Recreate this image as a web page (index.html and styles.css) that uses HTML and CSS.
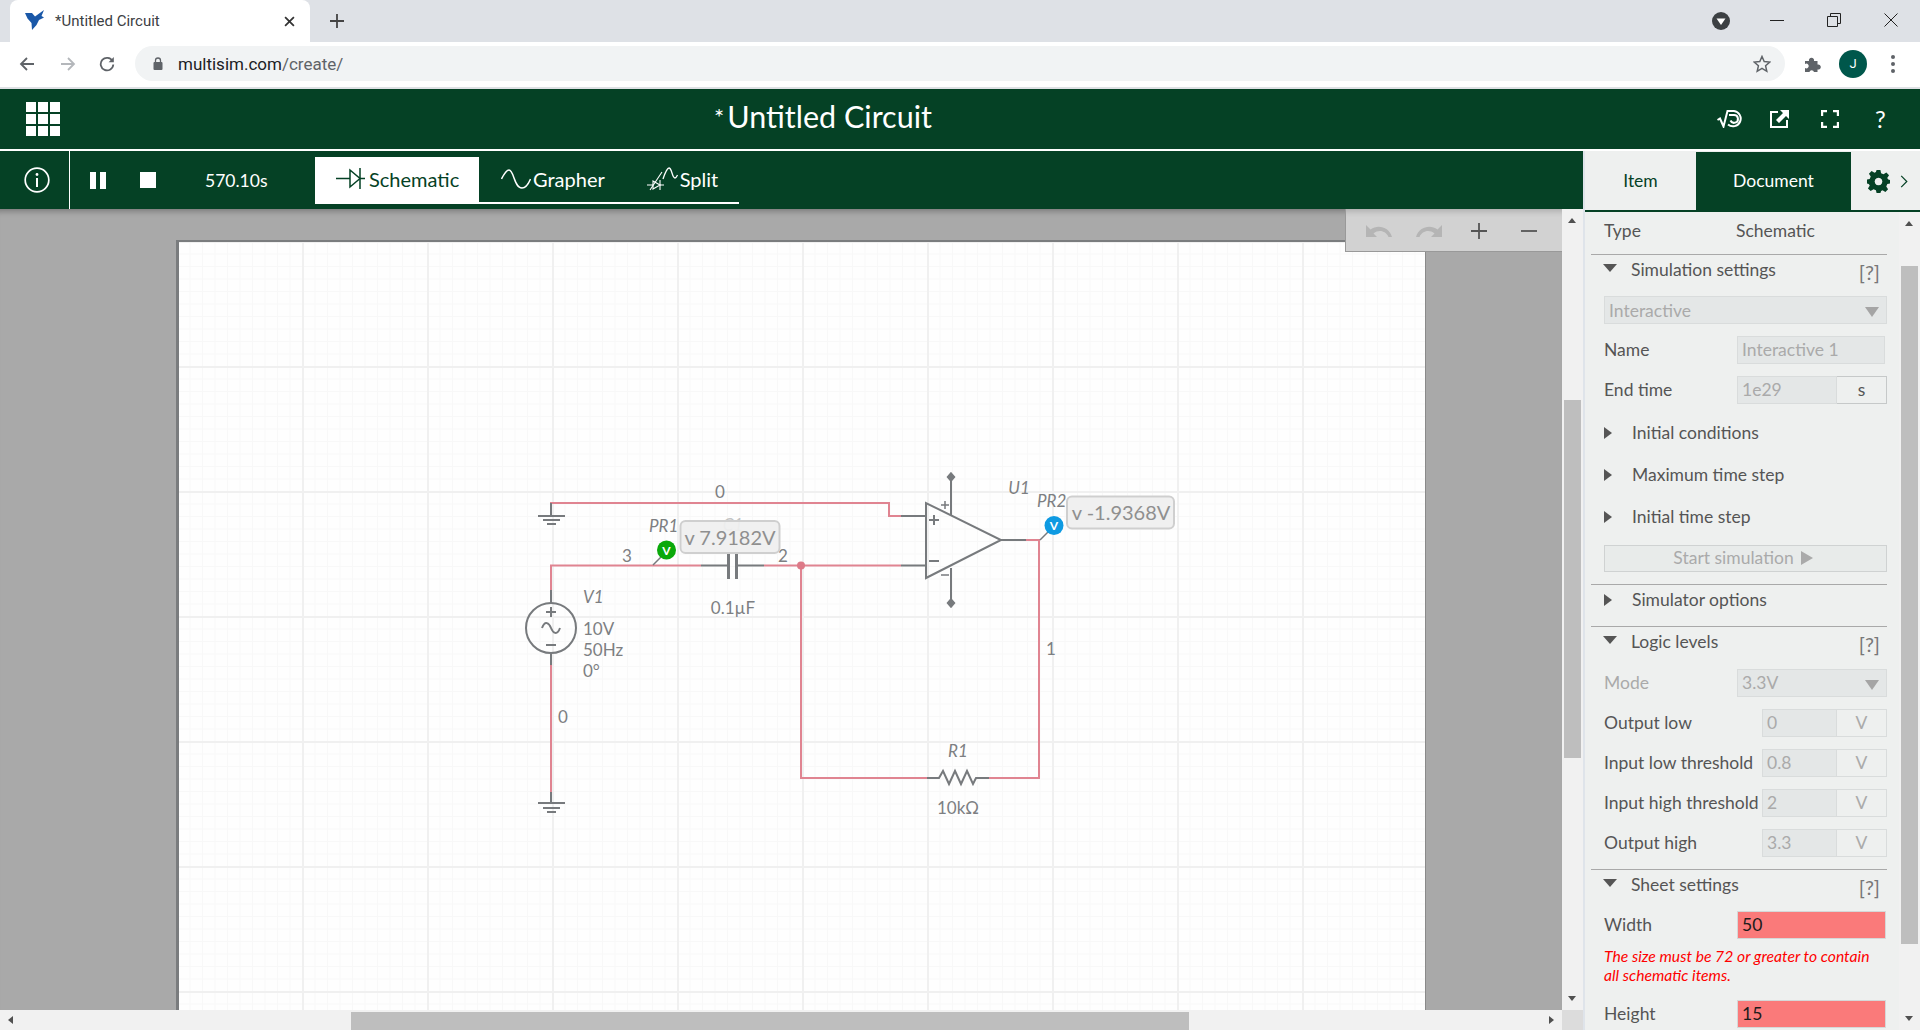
FILE: index.html
```html
<!DOCTYPE html>
<html>
  <head>
    <meta charset="UTF-8">
    <title>*Untitled Circuit</title>
    <link rel="stylesheet" href="styles.css">
  </head>
  <body>
    <!-- browser chrome -->
    <div class="tabstrip">
      <div class="tab">
        <svg class="favicon" viewBox="0 0 20 20"><path d="M0 3 L7 3 L10 6.500 L19 0 L16.500 6 L19 7.500 L14 10 L11.500 15 L7 20 L6.500 13 L2.500 8.500 Z" fill="#1a58a8"/></svg>
        <span class="tab-title">*Untitled Circuit</span>
        <svg class="tab-close" viewBox="0 0 10 10"><path d="M1 1 L9 9 M9 1 L1 9" stroke="#333" stroke-width="1.6"/></svg>
      </div>
      <svg class="new-tab" viewBox="0 0 14 14"><path d="M7 0 V14 M0 7 H14" stroke="#444" stroke-width="1.8"/></svg>
      <div class="window-btns">
        <svg class="profile-arrow" viewBox="0 0 18 18"><circle cx="9" cy="9" r="9" fill="#3c4043"/><path d="M4.500 6.500 H13.500 L9 13 Z" fill="#fff"/></svg>
        <svg class="win-btn" viewBox="0 0 14 14"><path d="M0 7.500 H14" stroke="#222" stroke-width="1"/></svg>
        <svg class="win-btn" viewBox="0 0 14 14"><path d="M0.500 3.500 H10.500 V13.500 H0.500 Z M3.500 3.500 V0.500 H13.500 V10.500 H10.500" fill="none" stroke="#222" stroke-width="1"/></svg>
        <svg class="win-btn" viewBox="0 0 14 14"><path d="M0.500 0.500 L13.500 13.500 M13.500 0.500 L0.500 13.500" stroke="#222" stroke-width="1"/></svg>
      </div>
    </div>
    <div class="addressbar">
      <svg class="nav-icon" viewBox="0 0 16 16"><path d="M15 8 H2 M8 2 L2 8 L8 14" fill="none" stroke="#5f6368" stroke-width="1.8"/></svg>
      <svg class="nav-icon" viewBox="0 0 16 16"><path d="M1 8 H14 M8 2 L14 8 L8 14" fill="none" stroke="#b4b7bb" stroke-width="1.8"/></svg>
      <svg class="nav-icon" viewBox="0 0 16 16"><path d="M13.500 5 A6.300 6.300 0 1 0 14.300 8.500" fill="none" stroke="#5f6368" stroke-width="1.8"/><path d="M14.800 1 V6.200 H9.600 Z" fill="#5f6368"/></svg>
      <div class="omnibox">
        <svg class="lock" viewBox="0 0 10 13"><path d="M2.500 5.500 V3.500 A2.500 2.500 0 0 1 7.500 3.500 V5.500" fill="none" stroke="#5f6368" stroke-width="1.3"/><rect x="0.500" y="5" width="9" height="8" rx="1" fill="#5f6368"/></svg>
        <span class="url">multisim.com<span class="url-path">/create/</span></span>
        <svg class="star-icon" viewBox="0 0 18 18"><path d="M9 1.500 L11.200 6.600 L16.800 7.100 L12.600 10.800 L13.800 16.300 L9 13.400 L4.200 16.300 L5.400 10.800 L1.200 7.100 L6.800 6.600 Z" fill="none" stroke="#5f6368" stroke-width="1.5"/></svg>
      </div>
      <svg class="puzzle" viewBox="0 0 18 18"><path d="M1 6 H5 A2.600 2.600 0 1 1 10 6 H13.500 V9.500 A2.600 2.600 0 1 1 13.500 14.500 V17 H10 A2.400 2.400 0 0 0 5.400 17 H1 V13 A2.400 2.400 0 1 0 1 9 Z" fill="#5f6368"/></svg>
      <span class="avatar">J</span>
      <span class="menu-dots"><i></i><i></i><i></i></span>
    </div>

    <!-- app header -->
    <header class="app-header">
      <div class="apps-grid"><i></i><i></i><i></i><i></i><i></i><i></i><i></i><i></i><i></i></div>
      <h1 class="app-title"><span class="title-star">*</span>Untitled Circuit</h1>
      <div class="header-actions">
        <svg class="h-sqrt" viewBox="0 0 28 18"><path d="M0.500 10 L3 8.500 L6.500 16.500 L10.500 1 H17 A7.700 7.700 0 1 1 11 14.500" fill="none" stroke="#fff" stroke-width="2"/><path d="M12 5 H17 A3.900 3.900 0 1 1 13.500 10.500" fill="none" stroke="#fff" stroke-width="2"/></svg>
        <svg class="h-share" viewBox="0 0 19 18"><path d="M8 2 H1 V17 H17 V10" fill="none" stroke="#fff" stroke-width="2"/><path d="M19 0 H10 L13 3 L6 10 L9 13 L16 6 L19 9 Z" fill="#fff"/></svg>
        <svg class="h-full" viewBox="0 0 18 18"><path d="M1 6 V1 H6 M12 1 H17 V6 M17 12 V17 H12 M6 17 H1 V12" fill="none" stroke="#fff" stroke-width="2.4"/></svg>
        <span class="h-help">?</span>
      </div>
    </header>

    <div class="workspace">
      <div class="main">
        <div class="sim-bar">
          <div class="info-cell">
            <svg class="info-icon" viewBox="0 0 26 26"><circle cx="13" cy="13" r="11.800" fill="none" stroke="#fff" stroke-width="1.7"/><circle cx="13" cy="7.500" r="1.400" fill="#fff"/><path d="M13 11 V20" stroke="#fff" stroke-width="2"/></svg>
          </div>
          <span class="pause"><i></i><i></i></span>
          <span class="stop"></span>
          <span class="sim-time">570.10s</span>
          <div class="view-tabs">
            <div class="view-tab active">
              <svg class="ic-diode" viewBox="0 0 29 21"><path d="M0 10.500 H14 M24 0 V21 M24 10.500 H29" fill="none" stroke="#054125" stroke-width="1.5"/><path d="M14 2 L24 10.500 L14 19 Z" fill="none" stroke="#054125" stroke-width="1.5"/></svg>
              Schematic
            </div>
            <div class="view-tab">
              <svg class="ic-sine" viewBox="0 0 30 20"><path d="M0.500 10 C4 3 6 1 8 1 C13 1 13 19 21 19 C24 19 27 16 29.500 10" fill="none" stroke="#fff" stroke-width="1.5"/></svg>
              Grapher
            </div>
            <div class="view-tab">
              <svg class="ic-split" viewBox="0 0 32 24"><path d="M1 18 H7 M14 13 V23 M14 18 H18" stroke="#fff" stroke-width="1.1" fill="none"/><path d="M7 14 L14 18 L7 22 Z" stroke="#fff" stroke-width="1.1" fill="none"/><path d="M4 23 L16 5" stroke="#fff" stroke-width="1.1" fill="none"/><path d="M17 12 C19 6 21 1 23 1 C26 1 26 11 29 11 C30 11 31 9 31.500 8" fill="none" stroke="#fff" stroke-width="1.3"/></svg>
              Split
            </div>
          </div>
        </div>

        <div class="canvas-row">
          <div class="canvas">
            <div class="sheet"></div>
            <svg class="circuit" viewBox="0 209 1562 801" width="1562" height="801">
              <g class="wire">
                <path d="M551 516 V503 H889 V516 H901"/>
                <path d="M551 590 V565.500 H701"/>
                <path d="M764 565.500 H901"/>
                <path d="M801 565.500 V778 H927"/>
                <path d="M989 778 H1039 V540 H1026"/>
                <path d="M551 665 V792"/>
              </g>
              <circle cx="801" cy="565.500" r="4" fill="#dd7a88"/>
              <g class="part">
                <!-- grounds -->
                <path d="M551 503 V516 M538 516 H565 M543 520 H560 M547 524 H556"/>
                <path d="M551 792 V803 M538 803 H565 M543 808 H560 M547 812 H556"/>
                <!-- source -->
                <path d="M551 590 V603 M551 653 V665"/>
                <circle cx="551" cy="628" r="25"/>
                <path d="M546 612 H556 M551 607 V617 M546 645 H556"/>
                <path d="M542 628 C545 620 549 623 551 628 C553 633 557 636 560 628"/>
                <!-- capacitor -->
                <path d="M701 565.500 H728.500 M736.500 565.500 H764"/>
                <path class="plate" d="M728.500 554 V579 M736.500 554 V579"/>
                <!-- opamp -->
                <path d="M926 503 V578 L1001 540 Z"/>
                <path d="M901 516 H926 M901 565.500 H926 M1001 540 H1026"/>
                <path d="M951 477 V516 M951 568 V603"/>
                <path d="M929 520 H939 M934 515 V525 M929 561 H939"/>
                <path class="thin" d="M941 505 H949 M945 501 V509 M941 575 H949"/>
                <path class="thin solid" d="M951 473 L954.500 477 L951 481 L947.500 477 Z M951 599 L954.500 603 L951 607 L947.500 603 Z"/>
                <!-- resistor -->
                <path d="M927 778 H939 L943 771 L949 784 L955 771 L961 784 L967 771 L973 784 L976 778 H989"/>
                <!-- probe leaders -->
                <path class="thin" d="M653 565 L661 557 M1040 540 L1048 532"/>
              </g>
              <text class="lbl" x="720" y="498" text-anchor="middle">0</text>
              <text class="lbl faded" x="733" y="531" text-anchor="middle">C1</text>
              <text class="lbl" x="627" y="562" text-anchor="middle">3</text>
              <text class="lbl" x="783" y="562" text-anchor="middle">2</text>
              <text class="lbl" x="733" y="614" text-anchor="middle">0.1µF</text>
              <text class="lbl ital" x="583" y="603">V1</text>
              <text class="lbl" x="583" y="635">10V</text>
              <text class="lbl" x="583" y="656">50Hz</text>
              <text class="lbl" x="583" y="677">0°</text>
              <text class="lbl" x="563" y="723" text-anchor="middle">0</text>
              <text class="lbl ital" x="1019" y="494" text-anchor="middle">U1</text>
              <text class="lbl" x="1051" y="655" text-anchor="middle">1</text>
              <text class="lbl ital" x="958" y="757" text-anchor="middle">R1</text>
              <text class="lbl" x="958" y="814" text-anchor="middle">10kΩ</text>
              <text class="lbl ital" x="649" y="532">PR1</text>
              <text class="lbl ital" x="1037" y="507">PR2</text>
              <rect class="readout" x="680.500" y="521" width="99" height="32" rx="5"/>
              <text class="readout-text" x="730" y="545" text-anchor="middle">v 7.9182V</text>
              <rect class="readout" x="1067" y="496.500" width="107" height="32" rx="5"/>
              <text class="readout-text" x="1121" y="520" text-anchor="middle">v -1.9368V</text>
              <circle cx="666.500" cy="550" r="9.500" fill="#0aa90a"/>
              <text class="probe-v" x="666.500" y="554.500" text-anchor="middle">V</text>
              <circle cx="1054" cy="525.500" r="9.500" fill="#0e9ae2"/>
              <text class="probe-v" x="1054" y="530" text-anchor="middle">V</text>
            </svg>
            <div class="zoom-bar">
              <svg class="undo" viewBox="0 0 26 13"><path d="M0 0 V12 H11 L7.500 8.500 C13 4 20 6 22.500 12 H26 C23 2 12 -1 4.500 4.500 Z" fill="#b5b5b5"/></svg>
              <svg class="undo" viewBox="0 0 26 13"><path d="M26 0 V12 H15 L18.500 8.500 C13 4 6 6 3.500 12 H0 C3 2 14 -1 21.500 4.500 Z" fill="#b5b5b5"/></svg>
              <svg class="zoom-ic" viewBox="0 0 16 16"><path d="M0 8 H16 M8 0 V16" stroke="#555" stroke-width="1.8"/></svg>
              <svg class="zoom-ic" viewBox="0 0 16 16"><path d="M0 8 H16" stroke="#555" stroke-width="1.8"/></svg>
            </div>
          </div>
          <div class="vscroll canvas-vscroll">
            <span class="arrow up"></span>
            <span class="thumb canvas-thumb"></span>
            <span class="arrow down"></span>
          </div>
        </div>

        <div class="canvas-bottom">
          <div class="hscroll">
            <span class="arrow left"></span>
            <span class="hthumb"></span>
            <span class="arrow right"></span>
          </div>
          <div class="corner"></div>
        </div>
      </div>

      <!-- properties panel -->
      <aside class="panel">
        <div class="panel-tabs">
          <div class="panel-tab">Item</div>
          <div class="panel-tab active">Document</div>
          <div class="panel-tools">
            <svg class="gear" viewBox="0 0 24 24"><path fill="#054125" fill-rule="evenodd" d="M10 0 H14 L14.700 3.400 L17.200 4.500 L20.200 2.600 L23 5.400 L21.100 8.400 L22.200 10 L24 10.500 V14 L21.200 14.700 L20.100 17.200 L22 20.200 L19.200 23 L16.200 21.100 L14.700 21.800 L14 24 H10 L9.300 21.200 L6.800 20.100 L3.800 22 L1 19.200 L2.900 16.200 L1.800 14.700 L0 14 V10 L2.800 9.300 L3.900 6.800 L2 3.800 L4.800 1 L7.800 2.900 L9.300 2.200 Z M12 8 A4 4 0 1 0 12.010 8 Z"/></svg>
            <svg class="chev" viewBox="0 0 8 14"><path d="M1 1 L7 7 L1 13" fill="none" stroke="#054125" stroke-width="1.3"/></svg>
          </div>
        </div>
        <div class="panel-scroller">
          <div class="panel-body">
            <div class="type-row"><span class="type-label">Type</span><span>Schematic</span></div>

            <div class="sect">
              <div class="sect-head"><span class="tri-down"></span>Simulation settings<span class="help">[?]</span></div>
              <div class="select select-wide"><span>Interactive</span><span class="select-arrow"></span></div>
              <div class="field"><span class="field-label">Name</span><span class="input input-name">Interactive 1</span></div>
              <div class="field"><span class="field-label">End time</span><span class="input input-num">1e29</span><span class="unit unit-dark">s</span></div>
              <div class="sub-head first"><span class="tri-right"></span>Initial conditions</div>
              <div class="sub-head"><span class="tri-right"></span>Maximum time step</div>
              <div class="sub-head"><span class="tri-right"></span>Initial time step</div>
              <div class="start-btn">Start simulation<span class="play"></span></div>
            </div>

            <div class="sect closed">
              <div class="sect-head"><span class="tri-right"></span>Simulator options</div>
            </div>

            <div class="sect">
              <div class="sect-head"><span class="tri-down"></span>Logic levels<span class="help">[?]</span></div>
              <div class="field"><span class="field-label muted">Mode</span><div class="select select-small"><span>3.3V</span><span class="select-arrow"></span></div></div>
              <div class="field"><span class="field-label">Output low</span><span class="input input-short">0</span><span class="unit">V</span></div>
              <div class="field"><span class="field-label">Input low threshold</span><span class="input input-short">0.8</span><span class="unit">V</span></div>
              <div class="field"><span class="field-label">Input high threshold</span><span class="input input-short">2</span><span class="unit">V</span></div>
              <div class="field"><span class="field-label">Output high</span><span class="input input-short">3.3</span><span class="unit">V</span></div>
            </div>

            <div class="sect last">
              <div class="sect-head"><span class="tri-down"></span>Sheet settings<span class="help">[?]</span></div>
              <div class="field field-sheet"><span class="field-label">Width</span><span class="input input-error">50</span></div>
              <p class="error-msg">The size must be 72 or greater to contain all schematic items.</p>
              <div class="field field-height"><span class="field-label">Height</span><span class="input input-error">15</span></div>
            </div>
          </div>
          <div class="vscroll panel-vscroll">
            <span class="arrow up"></span>
            <span class="thumb panel-thumb"></span>
            <span class="arrow down"></span>
          </div>
        </div>
      </aside>
    </div>
  </body>
</html>
```

FILE: styles.css
```css
* {
  box-sizing: border-box;
}

html,
body {
  margin: 0;
  height: 1030px;
  overflow: hidden;
}

body {
  display: flex;
  flex-direction: column;
  font-family: Lato, "Open Sans", sans-serif;
  background-color: #fff;
}

svg {
  display: block;
  flex: none;
}

/* browser chrome */
.tabstrip {
  height: 42px;
  flex: none;
  display: flex;
  align-items: flex-end;
  background-color: #dee1e6;
}

.tab {
  width: 300px;
  height: 42px;
  margin-left: 10px;
  padding: 0 13px 0 15px;
  display: flex;
  align-items: center;
  background-color: #fff;
  border-radius: 8px 8px 0 0;
}

.favicon {
  width: 20px;
  height: 20px;
  margin-bottom: 2px;
}

.tab-title {
  margin-left: 10px;
  flex: 1;
  font-family: Roboto, sans-serif;
  font-size: 15px;
  color: #3c4043;
}

.tab-close {
  width: 11px;
  height: 11px;
  margin-right: 2px;
}

.new-tab {
  width: 14px;
  height: 14px;
  margin: 0 0 14px 20px;
}

.window-btns {
  margin-left: auto;
  height: 42px;
  display: flex;
  align-items: center;
}

.profile-arrow {
  width: 18px;
  height: 18px;
  margin-right: 40px;
}

.win-btn {
  width: 14px;
  height: 14px;
  margin: 0 43px 3px 0;
}

.win-btn:last-child {
  margin-right: 22px;
}

.addressbar {
  height: 47px;
  flex: none;
  padding: 5px 0 7px 19px;
  display: flex;
  align-items: center;
  background-color: #fff;
  border-bottom: 2px solid #dfe1e5;
}

.nav-icon {
  width: 16px;
  height: 16px;
  margin-right: 25px;
}

.nav-icon:nth-child(2) {
  margin-right: 23px;
}

.nav-icon:nth-child(3) {
  margin-right: 20px;
}

.omnibox {
  width: 1650px;
  height: 35px;
  padding: 0 14px 0 18px;
  display: flex;
  align-items: center;
  background-color: #f1f3f4;
  border-radius: 18px;
}

.lock {
  width: 10px;
  height: 13px;
}

.url {
  margin-left: 15px;
  padding-top: 1px;
  font-family: Roboto, sans-serif;
  font-size: 17px;
  color: #202124;
}

.url-path {
  color: #5f6368;
}

.star-icon {
  width: 18px;
  height: 18px;
  margin-left: auto;
}

.puzzle {
  width: 18px;
  height: 18px;
  margin-left: 19px;
}

.avatar {
  width: 28px;
  height: 28px;
  margin-left: 17px;
  display: flex;
  align-items: center;
  justify-content: center;
  border-radius: 50%;
  background-color: #00574b;
  color: #fff;
  font-family: Roboto, sans-serif;
  font-size: 13px;
}

.menu-dots {
  margin-left: 24px;
  display: flex;
  flex-direction: column;
  gap: 3px;
}

.menu-dots i {
  width: 4px;
  height: 4px;
  border-radius: 50%;
  background-color: #5f6368;
}

/* app header */
.app-header {
  height: 62px;
  flex: none;
  position: relative;
  padding: 0 274px 6px 0;
  display: flex;
  align-items: center;
  justify-content: center;
  background-color: #054125;
  border-bottom: 2px solid #fff;
}

.apps-grid {
  position: absolute;
  left: 26px;
  top: 13px;
  display: grid;
  grid-template-columns: repeat(3, 10px);
  grid-auto-rows: 10px;
  gap: 2px;
}

.apps-grid i {
  background-color: #fff;
}

.app-title {
  margin: 0;
  font-size: 30.5px;
  font-weight: 400;
  color: #fff;
}

.title-star {
  font-size: 24px;
  vertical-align: 2px;
  margin-right: 3px;
}

.header-actions {
  position: absolute;
  left: 1717px;
  top: 21px;
  display: flex;
  align-items: center;
}

.h-sqrt {
  width: 28px;
  height: 18px;
}

.h-share {
  width: 19px;
  height: 18px;
  margin-left: 25px;
}

.h-full {
  width: 18px;
  height: 18px;
  margin-left: 32px;
}

.h-help {
  margin-left: 36px;
  font-size: 24px;
  line-height: 18px;
  color: #fff;
}

/* main area */
.workspace {
  flex: 1;
  display: flex;
  min-height: 0;
}

.main {
  width: 1583px;
  flex: none;
  display: flex;
  flex-direction: column;
}

.sim-bar {
  height: 58px;
  flex: none;
  display: flex;
  align-items: center;
  background-color: #054125;
}

.info-cell {
  width: 70px;
  height: 58px;
  padding-left: 24px;
  display: flex;
  align-items: center;
  border-right: 1px solid #fff;
}

.info-icon {
  width: 26px;
  height: 26px;
}

.pause {
  margin-left: 20px;
  display: flex;
  gap: 4px;
}

.pause i {
  width: 6px;
  height: 17px;
  background-color: #fff;
}

.stop {
  width: 16px;
  height: 16px;
  margin-left: 34px;
  background-color: #fff;
}

.sim-time {
  margin-left: 49px;
  width: 110px;
  font-size: 17.5px;
  color: #fff;
}

.view-tabs {
  width: 424px;
  height: 47px;
  margin-top: 1px;
  display: flex;
  border-bottom: 2px solid #fff;
}

.view-tab {
  height: 47px;
  padding-bottom: 4px;
  display: flex;
  align-items: center;
  gap: 2px;
  font-size: 20px;
  color: #fff;
}

.view-tab.active {
  width: 164px;
  padding-left: 21px;
  gap: 4px;
  background-color: #fff;
  color: #054125;
}

.view-tab:nth-child(2) {
  margin-left: 22px;
}

.view-tab:nth-child(3) {
  margin-left: 41px;
}

.ic-diode {
  width: 29px;
  height: 21px;
}

.ic-sine {
  width: 30px;
  height: 20px;
}

.ic-split {
  width: 32px;
  height: 24px;
}

.canvas-row {
  flex: 1;
  display: flex;
  min-height: 0;
}

.canvas {
  width: 1562px;
  height: 801px;
  position: relative;
  overflow: hidden;
  padding: 31px 0 0 176px;
  background-color: #a9a9a9;
  box-shadow: inset 0 8px 6px -6px rgba(0, 0, 0, 0.3);
}

/* grid: a heavy line every 125px, a light one every 12.5px */
.sheet {
  width: 1250px;
  height: 800px;
  background-color: #fefefe;
  border-left: 3px solid #7a7c7e;
  border-top: 2px solid #7a7c7e;
  border-right: 1px solid #8a8a8a;
  background-image:
    linear-gradient(to right, #f0f0f0 2px, transparent 2px),
    linear-gradient(to bottom, #f0f0f0 2px, transparent 2px),
    linear-gradient(to right, #f8f8f8 1px, transparent 1px),
    linear-gradient(to bottom, #f8f8f8 1px, transparent 1px);
  background-size: 125px 125px, 125px 125px, 12.5px 12.5px, 12.5px 12.5px;
  background-position: 123px 0, 0 124px, 10.5px 0, 0 11.5px;
}

.circuit {
  position: absolute;
  left: 0;
  top: 0;
}

.wire path {
  fill: none;
  stroke: #e08491;
  stroke-width: 2;
}

.part path,
.part circle {
  fill: none;
  stroke: #777a7d;
  stroke-width: 2;
}

.part .plate {
  stroke-width: 3;
}

.part .thin {
  stroke-width: 1.5;
}

.part .solid {
  fill: #777a7d;
}

.lbl {
  font-size: 17px;
  fill: #7d7f82;
}

.ital {
  font-style: italic;
}

.faded {
  font-style: italic;
  opacity: 0.45;
}

.readout {
  fill: #efefef;
  fill-opacity: 0.92;
  stroke: #cfcfcf;
  stroke-width: 2;
}

.readout-text {
  font-size: 20px;
  fill: #8f8f8f;
}

.probe-v {
  font-size: 12px;
  font-weight: 700;
  fill: #fff;
}

.zoom-bar {
  position: absolute;
  left: 1345px;
  top: 0;
  width: 218px;
  height: 43px;
  display: flex;
  align-items: center;
  padding: 2px 0 0 20px;
  background-color: #d2d2d2;
  border: 1px solid #999;
  border-top: 0;
  box-shadow: inset 0 8px 6px -6px rgba(0, 0, 0, 0.2);
}

.undo {
  width: 26px;
  height: 13px;
  margin-right: 24px;
}

.zoom-ic {
  width: 16px;
  height: 16px;
  margin-left: 5px;
  margin-right: 29px;
}

/* scrollbars */
.vscroll {
  width: 21px;
  flex: none;
  position: relative;
  background-color: #f1f1f1;
}

.thumb {
  position: absolute;
  left: 2px;
  width: 17px;
  background-color: #bebebe;
}

.canvas-thumb {
  top: 191px;
  height: 358px;
}

.panel-thumb {
  top: 54px;
  height: 678px;
}

.arrow {
  position: absolute;
  width: 0;
  height: 0;
  border-style: solid;
  border-color: transparent;
}

.arrow.up {
  left: 6px;
  top: 9px;
  border-width: 0 4.5px 5px;
  border-bottom-color: #505050;
}

.arrow.down {
  left: 6px;
  bottom: 9px;
  border-width: 5px 4.5px 0;
  border-top-color: #505050;
}

.canvas-bottom {
  height: 20px;
  flex: none;
  display: flex;
}

.hscroll {
  width: 1562px;
  position: relative;
  background-color: #f1f1f1;
}

.hthumb {
  position: absolute;
  left: 351px;
  top: 2px;
  width: 838px;
  height: 18px;
  background-color: #bebebe;
}

.arrow.left {
  left: 8px;
  top: 6px;
  border-width: 4.5px 5px 4.5px 0;
  border-right-color: #505050;
}

.arrow.right {
  right: 8px;
  top: 6px;
  border-width: 4.5px 0 4.5px 5px;
  border-left-color: #505050;
}

.corner {
  width: 21px;
  background-color: #dcdcdc;
}

/* panel */
.panel {
  flex: 1;
  display: flex;
  flex-direction: column;
  min-width: 0;
  border-left: 2px solid #dfe4ea;
  color: #555;
}

.panel-tabs {
  height: 61px;
  flex: none;
  padding-top: 1px;
  display: flex;
  background-color: #eef0ef;
  border-bottom: 2px solid #054125;
}

.panel-tab {
  width: 111px;
  padding-bottom: 2px;
  display: flex;
  align-items: center;
  justify-content: center;
  font-size: 17.5px;
  color: #054125;
}

.panel-tab.active {
  width: 155px;
  background-color: #054125;
  color: #fff;
}

.panel-tools {
  padding-left: 16px;
  display: flex;
  align-items: center;
  gap: 10px;
}

.gear {
  width: 23px;
  height: 23px;
}

.chev {
  width: 8px;
  height: 13px;
}

.panel-scroller {
  flex: 1;
  display: flex;
  min-height: 0;
}

.panel-body {
  flex: 1;
  min-width: 0;
  overflow: hidden;
  padding: 0 12px 0 6px;
  background-color: #eef0ef;
  font-size: 17.5px;
  line-height: 20px;
}

.type-row {
  height: 42px;
  padding: 0 0 5px 13px;
  display: flex;
  align-items: center;
}

.type-label {
  width: 132px;
}

.sect {
  border-top: 1px solid #a9a9a9;
  padding: 0 0 12px 13px;
}

.sect.closed {
  padding-bottom: 11px;
}

.sect-head {
  height: 30px;
  display: flex;
  align-items: center;
}

.tri-down {
  width: 0;
  height: 0;
  margin: -4px 14px 0 -1px;
  border-style: solid;
  border-width: 8px 7.5px 0;
  border-color: #555 transparent transparent;
}

.tri-right {
  width: 0;
  height: 0;
  margin-right: 20px;
  border-style: solid;
  border-width: 6.5px 0 6.5px 8px;
  border-color: transparent transparent transparent #555;
}

.help {
  margin-left: auto;
  margin-right: 7px;
  margin-top: 4px;
  font-size: 20px;
  color: #777;
}

.select {
  height: 28px;
  display: flex;
  align-items: center;
  justify-content: space-between;
  padding: 1px 7px 0 4px;
  background-color: #e4e7e7;
  border: 1px solid #d9dcdc;
  color: #aaa;
}

.select-wide {
  margin-top: 11px;
}

.select-small {
  width: 150px;
  margin-left: auto;
}

.select-arrow {
  width: 0;
  height: 0;
  margin-top: 3px;
  border-style: solid;
  border-width: 10px 7.5px 0;
  border-color: #a5a5a5 transparent transparent;
}

.field {
  height: 28px;
  margin-top: 12px;
  display: flex;
  align-items: center;
  justify-content: flex-end;
}

.field-label {
  margin-right: auto;
}

.muted {
  color: #aaa;
}

.input {
  height: 28px;
  padding-left: 4px;
  display: flex;
  align-items: center;
  background-color: #e4e7e7;
  border: 1px solid #d9dcdc;
  color: #aaa;
}

.input-name {
  width: 148px;
  margin-right: 2px;
}

.input-num {
  width: 100px;
}

.input-short {
  width: 75px;
}

.unit {
  width: 50px;
  height: 28px;
  display: flex;
  align-items: center;
  justify-content: center;
  border: 1px solid #d9dcdc;
  border-left: 0;
  color: #aaa;
}

.unit-dark {
  border-color: #c6c9c9;
  color: #555;
}

.sub-head {
  height: 42px;
  display: flex;
  align-items: center;
}

.sub-head.first {
  margin-top: 8px;
}

.start-btn {
  height: 27px;
  margin-top: 6.5px;
  padding-right: 5px;
  display: flex;
  align-items: center;
  justify-content: center;
  gap: 7px;
  background-color: #e8ebea;
  border: 1px solid #cfd2d2;
  color: #aaa;
}

.play {
  width: 0;
  height: 0;
  border-style: solid;
  border-width: 7px 0 7px 12px;
  border-color: transparent transparent transparent #aaa;
}

.field-sheet {
  margin-top: 11px;
}

.input-error {
  width: 149px;
  margin-right: 1px;
  background-color: #fa7a7a;
  border-color: #d5d8d8;
  color: #1c1c1c;
}

.error-msg {
  margin: 8px 0 0;
  width: 280px;
  font-size: 15.7px;
  line-height: 19px;
  font-style: italic;
  color: #f00;
}

.field-height {
  margin-top: 15px;
}

.last {
  padding-bottom: 0;
}
```
